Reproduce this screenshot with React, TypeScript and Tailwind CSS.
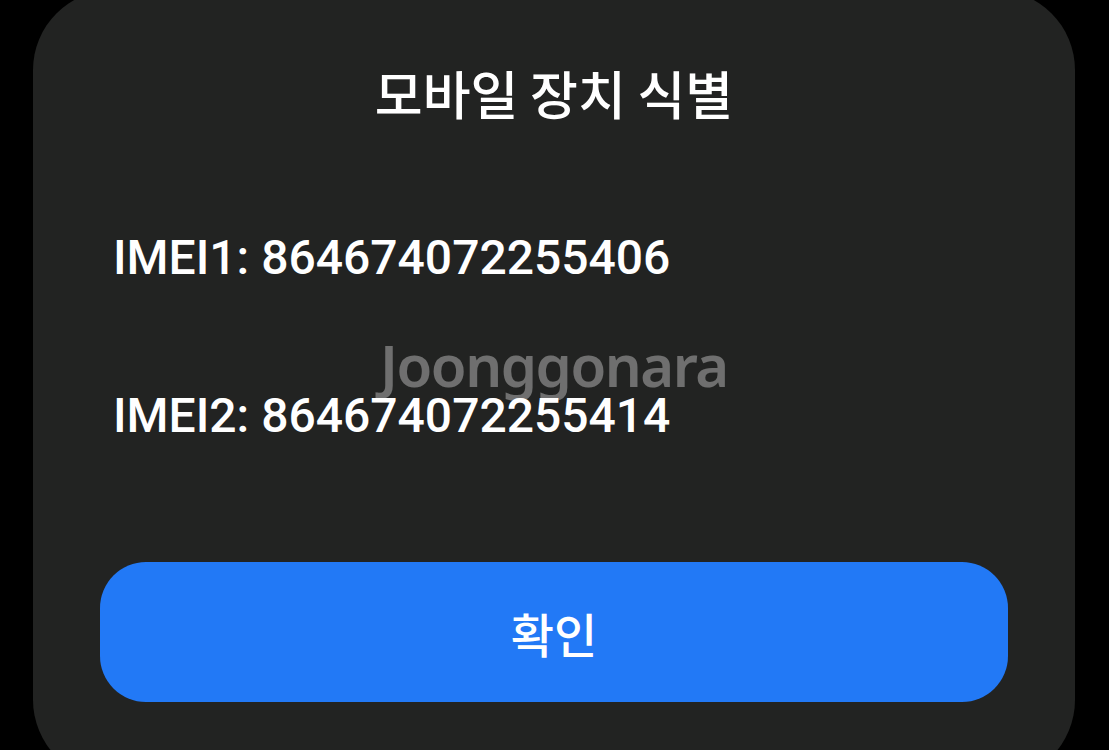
import React from "react";

const imeis = ["864674072255406", "864674072255414"];

const App: React.FC = () => {
  return (
    <div className="w-[1109px] h-[750px] overflow-hidden bg-black">
      <div className="relative ml-[33px] -mt-[10px] w-[1042px] h-[790px] rounded-[80px] bg-[#222322] px-[67px] pt-[77px] flex flex-col">
        {/* title */}
        <div className="text-center text-white text-[52px] leading-none font-medium font-['Noto_Sans_CJK_KR','Noto_Sans',sans-serif]">
          모바일 장치 식별
        </div>

        {/* IMEI rows */}
        <div className="mt-[115px] pl-[13px] flex flex-col gap-[110px] text-white text-[48px] leading-none font-medium font-['Roboto','Liberation_Sans',sans-serif]">
          {imeis.map((num, i) => (
            <div key={num}>
              IMEI{i + 1}: {num}
            </div>
          ))}
        </div>

        {/* confirm button */}
        <button className="mt-[122px] h-[140px] w-full rounded-[46px] bg-[#2279f6] text-white text-[47px] font-medium leading-none font-['Noto_Sans_CJK_KR','Noto_Sans',sans-serif]">
          확인
        </button>

        {/* watermark */}
        <div className="absolute left-[347px] top-[346px] text-[58px] leading-none font-semibold tracking-tight text-white/35 pointer-events-none font-['Noto_Sans',sans-serif]">
          Joonggonara
        </div>
      </div>
    </div>
  );
};

export default App;
